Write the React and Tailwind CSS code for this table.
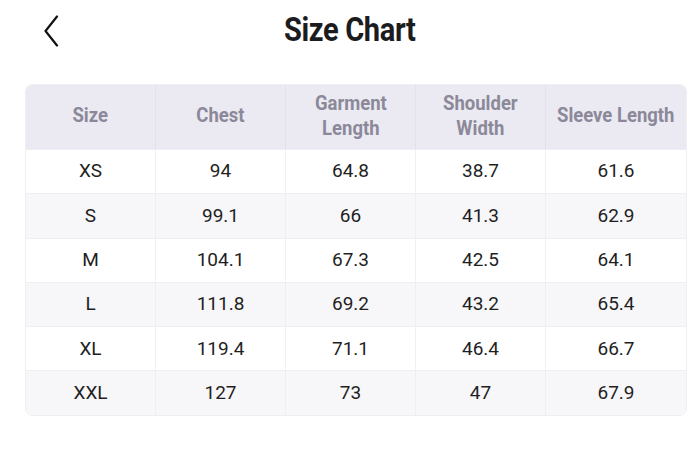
import React from "react";

const headers = ["Size", "Chest", "Garment\nLength", "Shoulder\nWidth", "Sleeve Length"];

const rows = [
  ["XS", "94", "64.8", "38.7", "61.6"],
  ["S", "99.1", "66", "41.3", "62.9"],
  ["M", "104.1", "67.3", "42.5", "64.1"],
  ["L", "111.8", "69.2", "43.2", "65.4"],
  ["XL", "119.4", "71.1", "46.4", "66.7"],
  ["XXL", "127", "73", "47", "67.9"],
];

const App = () => {
  return (
    <div className="w-[700px] h-[454px] bg-white font-['Roboto',sans-serif] text-[#1c1c1e]">
      <div className="relative h-[62px] flex items-center justify-center">
        <button className="absolute left-[40px] top-[14px] w-[22px] h-[34px] flex items-center justify-center">
          <svg width="18" height="32" viewBox="0 0 18 32" fill="none">
            <path d="M15 1.5 L3.5 16 L15 30.5" stroke="#111" strokeWidth="2.2" strokeLinecap="round" strokeLinejoin="round" />
          </svg>
        </button>
        <h1 className="text-[33px] font-bold leading-none tracking-[-0.4px] scale-x-[0.88] mt-[-4px]">
          Size Chart
        </h1>
      </div>

      <div className="ml-[25px] mt-[22px] w-[662px] rounded-[7px] overflow-hidden border border-[#efeff3]">
        <div className="grid grid-cols-[130px_130px_130px_130px_1fr] bg-[#ebeaf2] h-[64px]">
          {headers.map((h, i) => (
            <div
              key={i}
              className={`flex items-center justify-center text-center whitespace-pre-line text-[21px] leading-[25px] font-bold text-[#8b8999] ${
                i < 4 ? "border-r border-[#e3e2eb]" : ""
              }`}
            >
              <span className="scale-x-[0.88] inline-block mt-[-3px]">{h}</span>
            </div>
          ))}
        </div>
        {rows.map((r, ri) => (
          <div
            key={ri}
            className={`grid grid-cols-[130px_130px_130px_130px_1fr] h-[44.3px] border-t border-[#efeff3] ${
              ri % 2 === 1 ? "bg-[#f7f7f9]" : "bg-white"
            }`}
          >
            {r.map((c, ci) => (
              <div
                key={ci}
                className={`flex items-center justify-center text-[19px] text-[#1f1f1f] ${
                  ci < 4 ? "border-r border-[#efeff3]" : ""
                }`}
              >
                {c}
              </div>
            ))}
          </div>
        ))}
      </div>
    </div>
  );
};

export default App;
